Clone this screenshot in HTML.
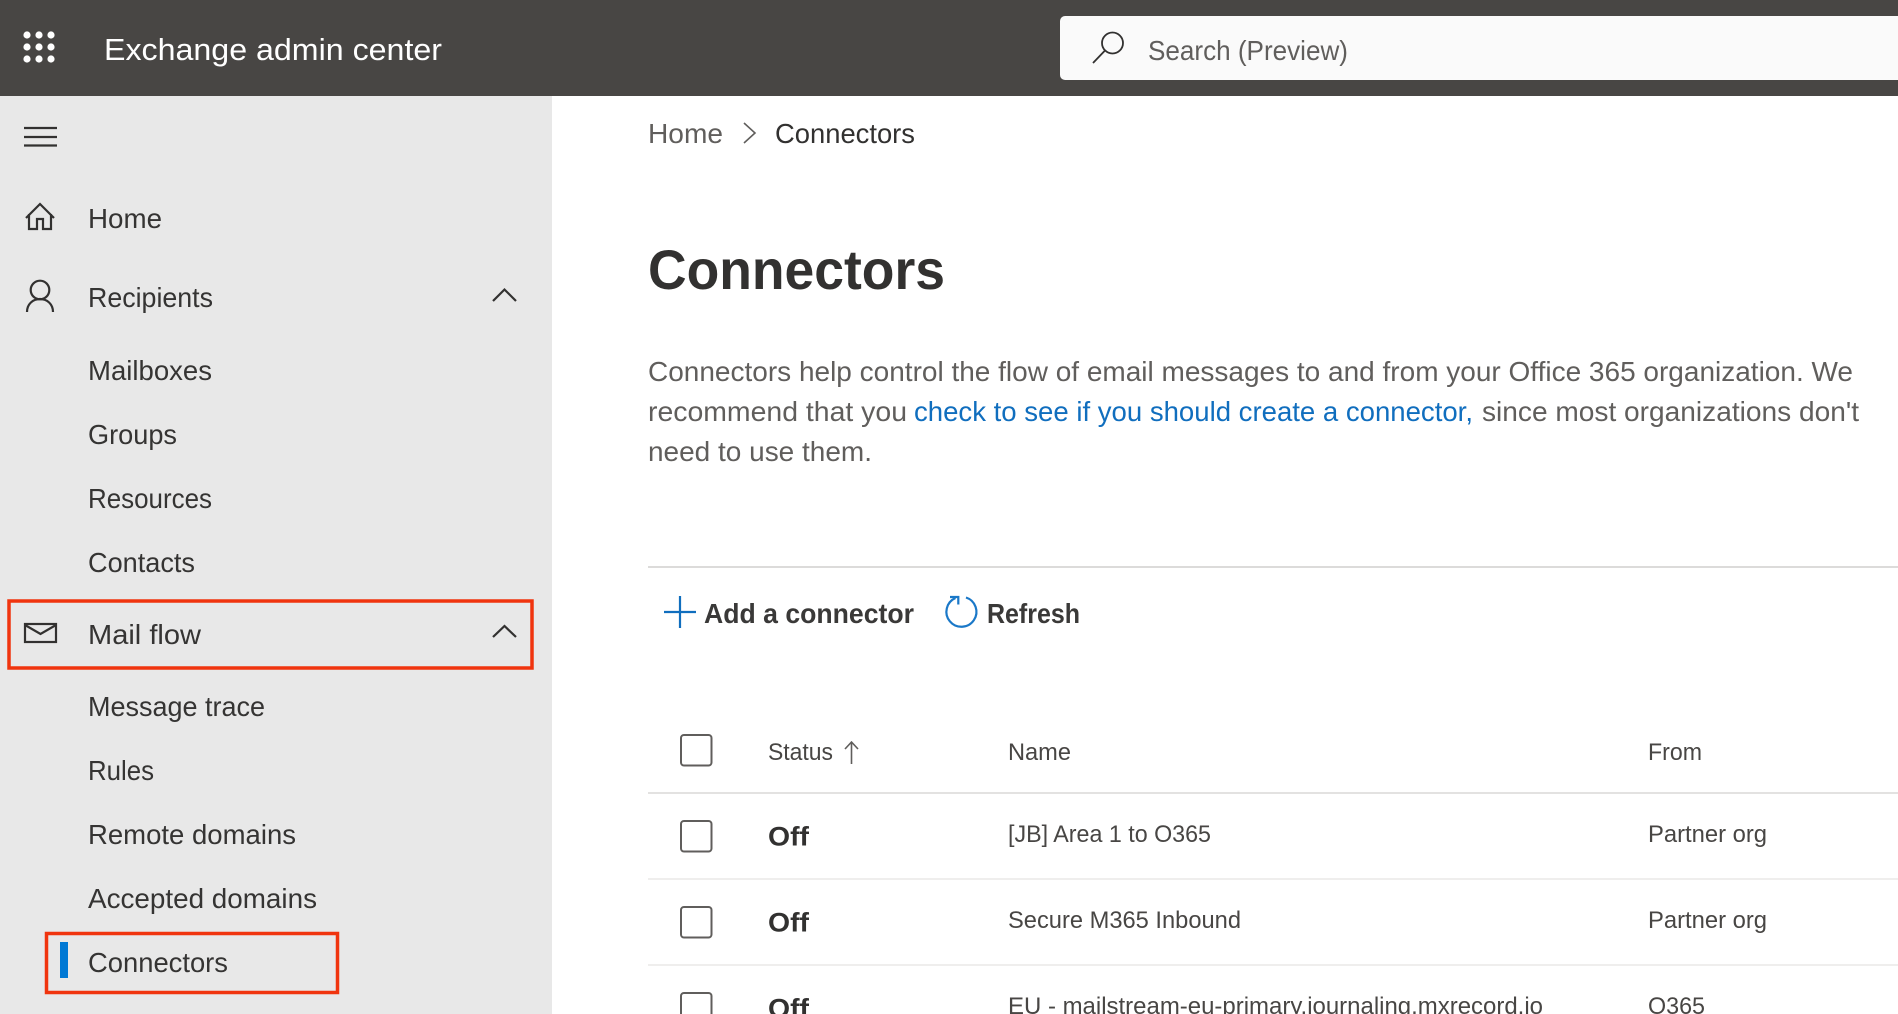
<!DOCTYPE html>
<html lang="en">
<head>
<meta charset="utf-8">
<title>Exchange admin center</title>
<style>
html,body{margin:0;padding:0;background:#fff;width:1898px;height:1014px;overflow:hidden}
svg{display:block}
text{font-family:"Liberation Sans",sans-serif;fill:#323130;font-size:27.5px}
.nav{fill:#353433}
.g{fill:#605e5c}
.h{fill:#484644;font-size:24px}
.c{fill:#484644;font-size:24px}
.i{fill:none;stroke:#323130;stroke-width:2.2}
.cb{fill:#fff;stroke:#605e5c;stroke-width:2}
.b{font-weight:bold}
</style>
</head>
<body>
<svg width="1898" height="1014" viewBox="0 0 1898 1014" xmlns="http://www.w3.org/2000/svg">
<rect width="1898" height="1014" fill="#fff"/>
<rect x="0" y="96" width="552" height="918" fill="#e8e8e8"/>
<rect width="1898" height="96" fill="#484644"/>

<g fill="#fff">
<circle cx="27" cy="35" r="3.6"/><circle cx="39" cy="35" r="3.6"/><circle cx="51" cy="35" r="3.6"/>
<circle cx="27" cy="47" r="3.6"/><circle cx="39" cy="47" r="3.6"/><circle cx="51" cy="47" r="3.6"/>
<circle cx="27" cy="59" r="3.6"/><circle cx="39" cy="59" r="3.6"/><circle cx="51" cy="59" r="3.6"/>
</g>
<text x="104" y="60" style="font-size:30.5px;fill:#fff" textLength="338" lengthAdjust="spacingAndGlyphs">Exchange admin center</text>

<path d="M1065 16H1898V80H1065a5 5 0 0 1-5-5V21a5 5 0 0 1 5-5z" fill="#fafafa"/>
<circle cx="1112.500" cy="43" r="10.500" fill="none" stroke="#323130" stroke-width="1.800"/>
<path d="M1105 50.500L1093 63" fill="none" stroke="#323130" stroke-width="1.800"/>
<text x="1148" y="60" class="g" textLength="200" lengthAdjust="spacingAndGlyphs">Search (Preview)</text>

<path d="M24 128H57M24 137H57M24 145.500H57" class="i"/>
<path d="M26 218L40 204L54 218M29 214V229H37V219H43V229H51V214" class="i"/>
<circle cx="40" cy="290" r="9.300" class="i"/>
<path d="M27 312C27 304 33 299 40 299C47 299 53 304 53 312" class="i"/>
<path d="M493 301L504.500 289.500L516 301" class="i"/>
<rect x="25" y="624" width="31" height="18" class="i"/>
<path d="M25 625L40.500 634L56 625" class="i"/>
<path d="M493 637L504.500 626L516 637" class="i"/>

<text x="88" y="228" class="nav" textLength="74" lengthAdjust="spacingAndGlyphs">Home</text>
<text x="88" y="307" class="nav" textLength="125" lengthAdjust="spacingAndGlyphs">Recipients</text>
<text x="88" y="380" class="nav" textLength="124" lengthAdjust="spacingAndGlyphs">Mailboxes</text>
<text x="88" y="444" class="nav" textLength="89" lengthAdjust="spacingAndGlyphs">Groups</text>
<text x="88" y="508" class="nav" textLength="124" lengthAdjust="spacingAndGlyphs">Resources</text>
<text x="88" y="572" class="nav" textLength="107" lengthAdjust="spacingAndGlyphs">Contacts</text>
<text x="88" y="644" class="nav" textLength="113" lengthAdjust="spacingAndGlyphs">Mail flow</text>
<text x="88" y="716" class="nav" textLength="177" lengthAdjust="spacingAndGlyphs">Message trace</text>
<text x="88" y="780" class="nav" textLength="66" lengthAdjust="spacingAndGlyphs">Rules</text>
<text x="88" y="844" class="nav" textLength="208" lengthAdjust="spacingAndGlyphs">Remote domains</text>
<text x="88" y="908" class="nav" textLength="229" lengthAdjust="spacingAndGlyphs">Accepted domains</text>
<text x="88" y="972" class="nav" textLength="140" lengthAdjust="spacingAndGlyphs">Connectors</text>

<rect x="9" y="601" width="523" height="67" fill="none" stroke="#f0340e" stroke-width="3.500"/>
<rect x="46.500" y="933.500" width="291" height="59" fill="none" stroke="#f0340e" stroke-width="3.500"/>
<rect x="60" y="942" width="8" height="36" fill="#0078d4"/>

<text x="648" y="143" class="g" textLength="75" lengthAdjust="spacingAndGlyphs">Home</text>
<path d="M744 123L755 133L744 143" fill="none" stroke="#605e5c" stroke-width="1.600"/>
<text x="775" y="143" textLength="140" lengthAdjust="spacingAndGlyphs">Connectors</text>

<text x="648" y="289" class="b" style="font-size:56px;fill:#323130" textLength="297" lengthAdjust="spacingAndGlyphs">Connectors</text>

<text x="648" y="381" class="g" textLength="1205" lengthAdjust="spacingAndGlyphs">Connectors help control the flow of email messages to and from your Office 365 organization. We</text>
<text x="648" y="421" class="g" textLength="259" lengthAdjust="spacingAndGlyphs">recommend that you</text>
<text x="914" y="421" style="fill:#106ebe" textLength="559" lengthAdjust="spacingAndGlyphs">check to see if you should create a connector,</text>
<text x="1482" y="421" class="g" textLength="377" lengthAdjust="spacingAndGlyphs">since most organizations don't</text>
<text x="648" y="461" class="g" textLength="224" lengthAdjust="spacingAndGlyphs">need to use them.</text>

<rect x="648" y="566" width="1250" height="2" fill="#dcdbda"/>

<path d="M664 612H696M680 596V628" fill="none" stroke="#106ebe" stroke-width="2.200"/>
<text x="704" y="623" class="b" style="fill:#3a3938" textLength="210" lengthAdjust="spacingAndGlyphs">Add a connector</text>
<path d="M966 597.500A15 15 0 1 1 955.500 598" fill="none" stroke="#1a78c8" stroke-width="2.200"/>
<path d="M950 597H958.300V604.500" fill="none" stroke="#1a78c8" stroke-width="2.200"/>
<text x="987" y="623" class="b" style="fill:#3a3938" textLength="93" lengthAdjust="spacingAndGlyphs">Refresh</text>

<rect x="681" y="735" width="30.500" height="30.500" rx="3" class="cb"/>
<text x="768" y="760" class="h" textLength="65" lengthAdjust="spacingAndGlyphs">Status</text>
<path d="M851.500 742V764M845 749L851.500 742L858 749" fill="none" stroke="#605e5c" stroke-width="1.600"/>
<text x="1008" y="760" class="h" textLength="63" lengthAdjust="spacingAndGlyphs">Name</text>
<text x="1648" y="760" class="h" textLength="54" lengthAdjust="spacingAndGlyphs">From</text>

<rect x="648" y="792" width="1250" height="2" fill="#e3e2e1"/>
<rect x="648" y="878" width="1250" height="2" fill="#efeeed"/>
<rect x="648" y="964" width="1250" height="2" fill="#efeeed"/>

<rect x="681" y="821" width="30.500" height="30.500" rx="3" class="cb"/>
<text x="768" y="845.500" class="b" style="font-size:26.500px" textLength="41" lengthAdjust="spacingAndGlyphs">Off</text>
<text x="1008" y="842" class="c" textLength="203" lengthAdjust="spacingAndGlyphs">[JB] Area 1 to O365</text>
<text x="1648" y="842" class="c" textLength="119" lengthAdjust="spacingAndGlyphs">Partner org</text>

<rect x="681" y="907" width="30.500" height="30.500" rx="3" class="cb"/>
<text x="768" y="931.500" class="b" style="font-size:26.500px" textLength="41" lengthAdjust="spacingAndGlyphs">Off</text>
<text x="1008" y="928" class="c" textLength="233" lengthAdjust="spacingAndGlyphs">Secure M365 Inbound</text>
<text x="1648" y="928" class="c" textLength="119" lengthAdjust="spacingAndGlyphs">Partner org</text>

<rect x="681" y="993" width="30.500" height="30.500" rx="3" class="cb"/>
<text x="768" y="1017.500" class="b" style="font-size:26.500px" textLength="41" lengthAdjust="spacingAndGlyphs">Off</text>
<text x="1008" y="1014" class="c" textLength="535" lengthAdjust="spacingAndGlyphs">EU - mailstream-eu-primary.journaling.mxrecord.io</text>
<text x="1648" y="1014" class="c" textLength="57" lengthAdjust="spacingAndGlyphs">O365</text>
</svg>
</body>
</html>
